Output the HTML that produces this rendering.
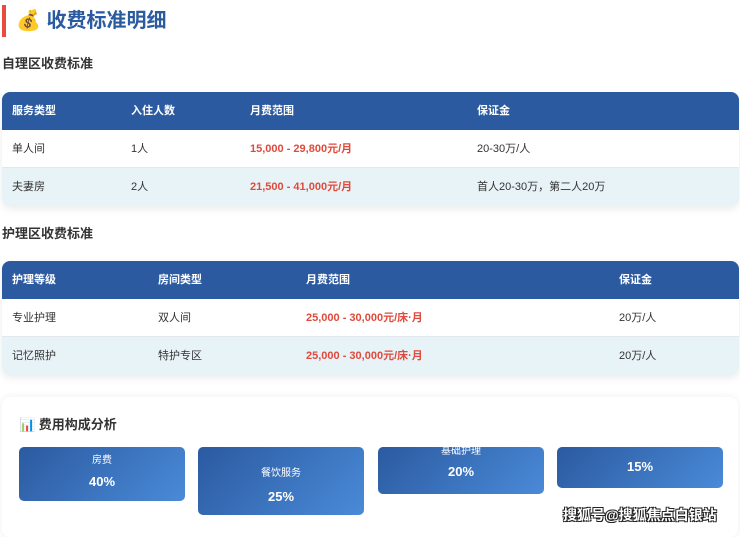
<!DOCTYPE html>
<html><head><meta charset="utf-8"><style>
*{margin:0;padding:0;box-sizing:border-box}
body{width:740px;height:529px;overflow:hidden;background:#fff;font-family:"Liberation Sans","Noto Sans CJK SC",sans-serif;position:relative;color:#333}
.abs{position:absolute}
.bar{left:2px;top:5px;width:4px;height:32px;background:#e74c3c}
h1{position:absolute;left:16px;top:7px;font-size:20px;color:#2a5aa0;font-weight:bold;line-height:28px;white-space:nowrap}
.sec{position:absolute;left:2px;font-size:13px;font-weight:bold;color:#333}
.tbl{position:absolute;left:2px;width:737px;border-radius:8px;overflow:hidden;box-shadow:0 3px 8px rgba(0,0,0,.08)}
.row{height:38px;position:relative;font-size:11px}
.hd{background:#2b5aa0;color:#fff;font-weight:bold}
.r1{background:#fff;border-bottom:1px solid #e3e8ee}
.r2{background:#e8f3f8}
.row span{position:absolute;top:0;line-height:38px;white-space:nowrap}
.red{color:#e04a3c;font-weight:bold}
.card{position:absolute;left:2px;top:397px;width:736px;height:140px;background:#fff;border-radius:8px;box-shadow:0 0 8px rgba(0,0,0,.07)}
.box{position:absolute;top:447px;width:166px;border-radius:5px;background:linear-gradient(135deg,#2b5aa0,#4a8ad8);color:#fff;text-align:center}
.box .l{font-size:10px}
.box .v{font-size:13px;font-weight:bold}
.wm{position:absolute;left:563px;top:505px;font-size:14px;font-weight:bold;color:#fff;text-shadow:-1px -1px 0 #222,1px -1px 0 #222,-1px 1px 0 #222,1px 1px 0 #222;white-space:nowrap}
</style></head><body>
<div class="abs bar"></div>
<h1>💰 收费标准明细</h1>
<div class="sec" style="top:53px">自理区收费标准</div>
<div class="tbl" style="top:92px">
<div class="row hd"><span style="left:10px">服务类型</span><span style="left:129px">入住人数</span><span style="left:248px">月费范围</span><span style="left:475px">保证金</span></div>
<div class="row r1"><span style="left:10px">单人间</span><span style="left:129px">1人</span><span style="left:248px" class="red">15,000 - 29,800元/月</span><span style="left:475px">20-30万/人</span></div>
<div class="row r2"><span style="left:10px">夫妻房</span><span style="left:129px">2人</span><span style="left:248px" class="red">21,500 - 41,000元/月</span><span style="left:475px">首人20-30万，第二人20万</span></div>
</div>
<div class="sec" style="top:223px">护理区收费标准</div>
<div class="tbl" style="top:261px">
<div class="row hd"><span style="left:10px">护理等级</span><span style="left:156px">房间类型</span><span style="left:304px">月费范围</span><span style="left:617px">保证金</span></div>
<div class="row r1"><span style="left:10px">专业护理</span><span style="left:156px">双人间</span><span style="left:304px" class="red">25,000 - 30,000元/床·月</span><span style="left:617px">20万/人</span></div>
<div class="row r2"><span style="left:10px">记忆照护</span><span style="left:156px">特护专区</span><span style="left:304px" class="red">25,000 - 30,000元/床·月</span><span style="left:617px">20万/人</span></div>
</div>
<div class="card"></div>
<div class="abs" style="left:19px;top:414px;font-size:13px;font-weight:bold;color:#333">📊 费用构成分析</div>
<div class="box" style="left:19px;height:54px"><div class="l" style="margin-top:4px">房费</div><div class="v" style="margin-top:8px">40%</div></div>
<div class="box" style="left:198px;height:68px"><div class="l" style="margin-top:17px">餐饮服务</div><div class="v" style="margin-top:10px">25%</div></div>
<div class="box" style="left:378px;height:47px;overflow:hidden"><div class="l" style="margin-top:-5px">基础护理</div><div class="v" style="margin-top:7px">20%</div></div>
<div class="box" style="left:557px;height:41px"><div class="v" style="margin-top:12px">15%</div></div>
<div class="wm">搜狐号@搜狐焦点白银站</div>
</body></html>
